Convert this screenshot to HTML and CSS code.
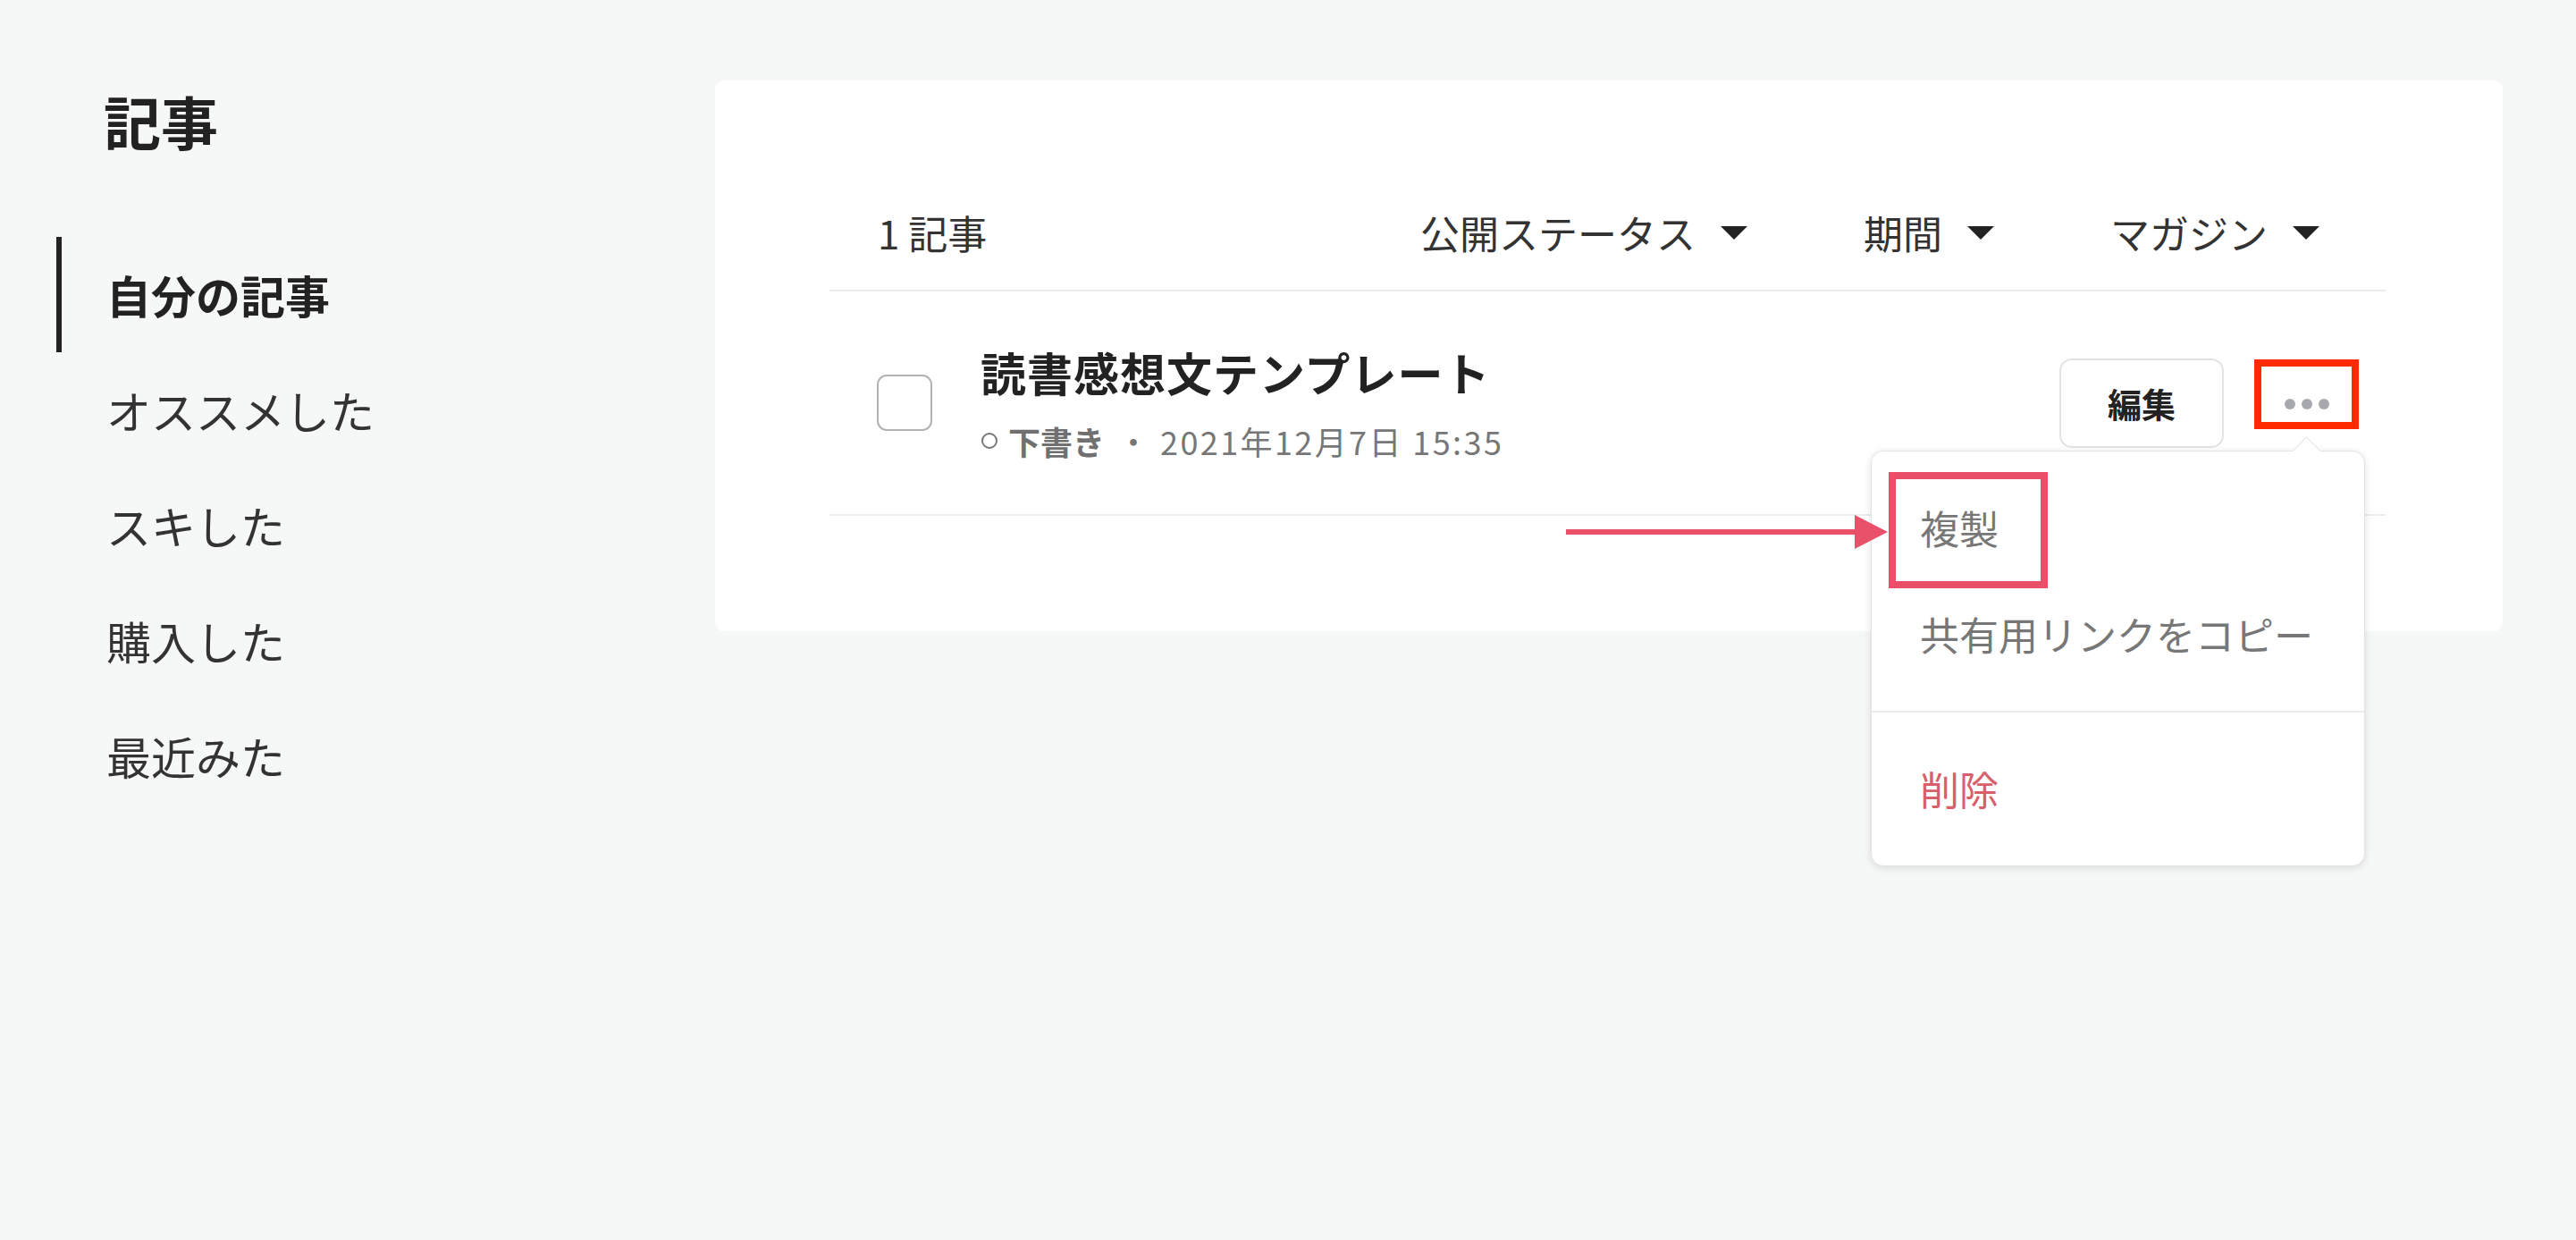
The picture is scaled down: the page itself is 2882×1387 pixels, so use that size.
FILE: index.html
```html
<!DOCTYPE html>
<html lang="ja">
<head>
    <meta charset="UTF-8">
    <meta name="viewport" content="width=device-width, initial-scale=1.0">
    <title>記事</title>
    <link rel="stylesheet" href="styles.css">
</head>
<body>
    <div class="page">
        <div class="sidebar">
            <h1>記事</h1>
            <ul class="side-nav">
                <li class="active">自分の記事</li>
                <li>オススメした</li>
                <li>スキした</li>
                <li>購入した</li>
                <li>最近みた</li>
            </ul>
        </div>
        <div class="card">
            <div class="list-head">
                <div class="count">1 記事</div>
                <div class="filters">
                    <div class="filter">公開ステータス<span class="tri"></span></div>
                    <div class="filter">期間<span class="tri"></span></div>
                    <div class="filter">マガジン<span class="tri"></span></div>
                </div>
            </div>
            <div class="note-row">
                <div class="checkbox"></div>
                <div class="note-info">
                    <div class="note-title">読書感想文テンプレート</div>
                    <div class="note-meta">
                        <span class="ring"></span><span class="status">下書き</span><span class="dot-sep">・</span><span class="date">2021年12月7日 15:35</span>
                    </div>
                </div>
                <button type="button" class="edit-btn">編集</button>
                <div class="more-btn">
                    <span></span><span></span><span></span>
                    <div class="menu">
                        <ul class="menu-group">
                            <li>複製</li>
                            <li>共有用リンクをコピー</li>
                        </ul>
                        <ul class="menu-group">
                            <li class="danger">削除</li>
                        </ul>
                        <div class="mark-box"></div>
                        <svg class="mark-arrow" width="360" height="38" viewBox="0 0 360 38">
                            <rect x="0" y="16" width="326" height="6" fill="#e9506a"/>
                            <polygon points="323,0 360,19 323,38" fill="#e9506a"/>
                        </svg>
                    </div>
                </div>
            </div>
        </div>
    </div>
</body>
</html>
```

FILE: styles.css
```css
* {
    margin: 0;
    padding: 0;
    box-sizing: border-box;
}

html,
body {
    min-height: 100vh;
}

body {
    background-color: #f6f7f7;
    font-family: "Noto Sans CJK JP", "Noto Sans", sans-serif;
    color: #222;
}

ul {
    list-style: none;
}

.page {
    display: flex;
    align-items: flex-start;
    min-height: 100vh;
    padding-top: 90px;
}

/* left column */
.sidebar {
    width: 800px;
    padding-left: 63px;
}

.sidebar h1 {
    margin-top: 12px;
    padding-left: 53px;
    font-size: 64px;
    line-height: 64px;
    font-weight: bold;
}

.side-nav {
    margin-top: 99px;
}

.side-nav li {
    height: 129px;
    line-height: 129px;
    padding-left: 50px;
    border-left: 6px solid transparent;
    font-size: 50px;
    color: #333;
}

.side-nav li.active {
    border-left-color: #222;
    font-weight: bold;
    color: #222;
}

/* card */
.card {
    width: 2000px;
    background-color: #fff;
    border-radius: 10px;
    padding: 130px 131px 129px 128px;
}

.list-head {
    display: flex;
    align-items: center;
    height: 106px;
    padding: 0 74px 24px 54px;
    border-bottom: 2px solid #ececec;
    font-size: 44px;
    line-height: 80px;
    color: #333;
}

.count {
    flex: 1;
}

.filters {
    display: flex;
    gap: 130px;
}

.filter {
    display: flex;
    align-items: center;
    gap: 28px;
}

.tri {
    width: 0;
    height: 0;
    border-left: 15px solid transparent;
    border-right: 15px solid transparent;
    border-top: 15px solid #222;
}

.note-row {
    display: flex;
    align-items: center;
    height: 251px;
    padding: 0 30px 0 53px;
    border-bottom: 2px solid #ececec;
}

.checkbox {
    width: 62px;
    height: 63px;
    border: 2px solid #b3b3b3;
    border-radius: 11px;
    margin-right: 54px;
}

.note-info {
    flex: 1;
}

.note-title {
    font-size: 51px;
    line-height: 60px;
    font-weight: bold;
    letter-spacing: 1px;
    color: #222;
}

.note-meta {
    display: flex;
    align-items: center;
    margin-top: 25px;
    font-size: 36px;
    line-height: 44px;
    color: #777;
}

.ring {
    width: 18px;
    height: 18px;
    border: 2px solid #777;
    border-radius: 50%;
    margin: 0 12px 0 1px;
}

.status {
    font-weight: bold;
    color: #707070;
}

.dot-sep {
    margin: 0 12px 0 14px;
}

.date {
    letter-spacing: 2.4px;
}

.edit-btn {
    width: 184px;
    height: 100px;
    border: 2px solid #e3e3e3;
    border-radius: 14px;
    background-color: #fff;
    font-family: inherit;
    font-size: 38px;
    font-weight: bold;
    color: #222;
    margin-right: 34px;
}

.more-btn {
    position: relative;
    display: flex;
    align-items: flex-end;
    justify-content: center;
    gap: 7px;
    width: 117px;
    height: 78px;
    margin-bottom: 20px;
    padding-bottom: 14px;
    border: 8px solid #ff2a00;
}

.more-btn > span {
    width: 12px;
    height: 12px;
    border-radius: 50%;
    background-color: #a7a9ae;
}

/* dropdown */
.menu {
    position: absolute;
    left: -437px;
    top: 94px;
    width: 553px;
    z-index: 2;
    background-color: #fff;
    border: 1px solid #e4e4e4;
    border-radius: 14px;
    box-shadow: 0 2px 8px rgba(0, 0, 0, 0.12);
    font-size: 44px;
    color: #777;
}

.menu::before {
    content: "";
    position: absolute;
    top: -12px;
    left: 475px;
    width: 22px;
    height: 22px;
    background-color: #fff;
    border-top: 1px solid #e4e4e4;
    border-left: 1px solid #e4e4e4;
    transform: rotate(45deg);
}

.menu-group {
    padding: 26px 0;
}

.menu-group + .menu-group {
    border-top: 2px solid #ebebeb;
}

.menu-group li {
    height: 119px;
    line-height: 119px;
    padding-left: 54px;
}

.menu-group li.danger {
    color: #d7606b;
}

.mark-box {
    position: absolute;
    left: 19px;
    top: 23px;
    width: 178px;
    height: 130px;
    border: 8px solid #ea4f68;
}

.mark-arrow {
    position: absolute;
    left: -342px;
    top: 71px;
}
```
